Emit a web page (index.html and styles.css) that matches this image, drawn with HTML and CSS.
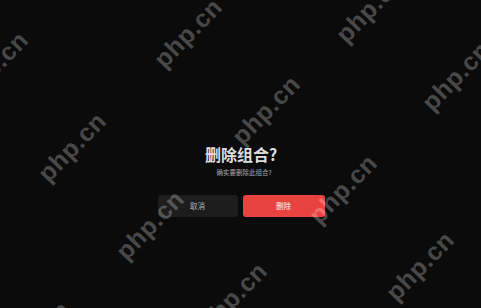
FILE: index.html
```html
<!DOCTYPE html>
<html lang="zh-CN">
<head>
<meta charset="utf-8">
<title>删除组合</title>
<link rel="stylesheet" href="styles.css">
</head>
<body>
<div class="screen">
  <div class="dialog">
    <div class="title">删除组合?</div>
    <div class="subtitle">确实要删除此组合?</div>
    <div class="actions">
      <button class="btn btn-cancel">取消</button>
      <button class="btn btn-delete">删除</button>
    </div>
  </div>
  <div class="watermarks">
    <span class="wm w1">php.cn</span>
    <span class="wm w2">php.cn</span>
    <span class="wm w3">php.cn</span>
    <span class="wm w4">php.cn</span>
    <span class="wm w5">php.cn</span>
    <span class="wm w6">php.cn</span>
    <span class="wm w7">php.cn</span>
    <span class="wm w8">php.cn</span>
    <span class="wm w9">php.cn</span>
    <span class="wm w10">php.cn</span>
    <span class="wm w11">php.cn</span>
  </div>
</div>
</body>
</html>
```
FILE: styles.css
```css
html, body {
  margin: 0;
  padding: 0;
  background: #0b0b0b;
}
.screen {
  position: relative;
  width: 481px;
  height: 308px;
  overflow: hidden;
  background: #0b0b0b;
  font-family: "Noto Sans CJK SC", "Noto Sans", sans-serif;
}
.dialog {
  display: flex;
  flex-direction: column;
  align-items: center;
  padding-top: 144px;
  padding-left: 1px;
}
.title {
  font-size: 16px;
  line-height: 20px;
  font-weight: 700;
  color: #dedede;
}
.subtitle {
  margin-top: 3px;
  padding-left: 6px;
  font-size: 6.5px;
  line-height: 10px;
  color: #a8a8a8;
}
.actions {
  display: flex;
  gap: 5px;
  margin-top: 18px;
}
.btn {
  height: 22px;
  border: none;
  border-radius: 3px;
  padding: 0;
  font-family: "Noto Sans CJK SC", "Noto Sans", sans-serif;
  font-size: 7.5px;
  line-height: 22px;
}
.btn-cancel {
  width: 80px;
  background: #1d1d1d;
  color: #b5b5b5;
}
.btn-delete {
  width: 82px;
  background: #e8433e;
  color: #f4f4f4;
}
.watermarks {
  position: absolute;
  inset: 0;
  pointer-events: none;
}
.wm {
  position: absolute;
  transform: translate(-50%, -50%) rotate(-46deg);
  font-family: "Liberation Sans", Arial, sans-serif;
  font-weight: 700;
  font-size: 25px;
  letter-spacing: 0.5px;
  line-height: 25px;
  color: rgba(255, 255, 255, 0.26);
  white-space: nowrap;
}
.w1 { left: -6px; top: 66px; }
.w2 { left: 188px; top: 33px; }
.w3 { left: 72px; top: 147px; }
.w4 { left: 370px; top: 8px; }
.w5 { left: 266px; top: 110px; }
.w6 { left: 456px; top: 76px; }
.w7 { left: 150px; top: 225px; }
.w8 { left: 343px; top: 189px; }
.w9 { left: 420px; top: 266px; }
.w10 { left: 233px; top: 297px; }
.w11 { left: 36px; top: 336px; }
```
